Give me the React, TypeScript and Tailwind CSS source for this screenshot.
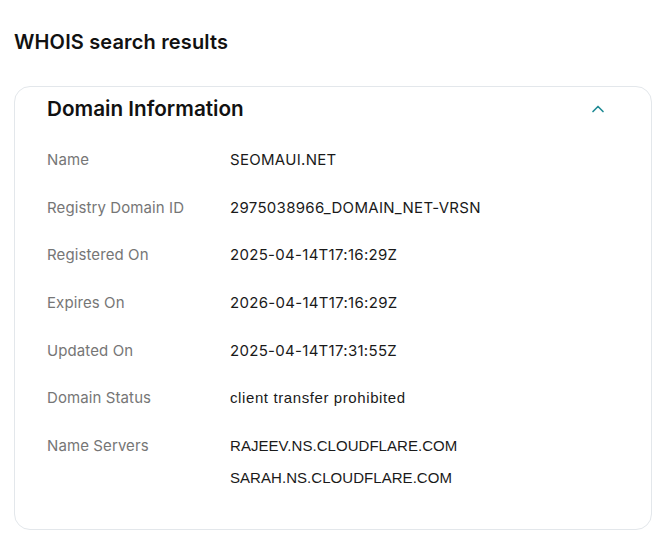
import { ChevronUp } from "lucide-react"

const rows: { label: string; values: string[]; alt?: boolean }[] = [
  { label: "Name", values: ["SEOMAUI.NET"] },
  { label: "Registry Domain ID", values: ["2975038966_DOMAIN_NET-VRSN"] },
  { label: "Registered On", values: ["2025-04-14T17:16:29Z"] },
  { label: "Expires On", values: ["2026-04-14T17:16:29Z"] },
  { label: "Updated On", values: ["2025-04-14T17:31:55Z"] },
  { label: "Domain Status", values: ["client transfer prohibited"], alt: true },
  { label: "Name Servers", values: ["RAJEEV.NS.CLOUDFLARE.COM", "SARAH.NS.CLOUDFLARE.COM"], alt: true },
]

export default function App() {
  return (
    <div className="min-h-screen bg-white px-[14px] pt-[28px] font-['Inter',sans-serif] text-[#111]">
      <h1 className="text-[20px] font-semibold leading-[28px] tracking-[0.15px]">WHOIS search results</h1>

      <div className="mt-[30px] w-[638px] rounded-[16px] border border-[#e3e7eb] pb-[41px] pl-[32px] pr-[43px] pt-[8px]">
        <div className="flex items-center justify-between">
          <h2 className="text-[20.7px] font-semibold leading-[28px]">Domain Information</h2>
          <ChevronUp className="h-5 w-5 text-[#1f8a94]" strokeWidth={2} />
        </div>

        <div className="mt-[27px] flex flex-col gap-[27.7px]">
          {rows.map((r) => (
            <div key={r.label} className="flex text-[15px] leading-[20px]">
              <div className="w-[183px] shrink-0 tracking-[0.1px] text-[#767676]">{r.label}</div>
              <div
                className={
                  "flex flex-col gap-[12px] text-[#1a1a1a] " +
                  (r.alt ? "font-['Liberation_Sans',sans-serif] tracking-[0.05px]" : "tracking-[0.3px]")
                }
              >
                {r.values.map((v) => (
                  <div key={v} className={v.startsWith("client") ? "tracking-[0.6px]" : ""}>
                    {v}
                  </div>
                ))}
              </div>
            </div>
          ))}
        </div>
      </div>
    </div>
  )
}
